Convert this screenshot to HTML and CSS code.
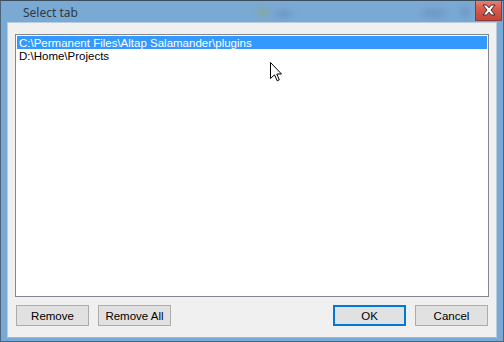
FILE: index.html
```html
<!DOCTYPE html>
<html>
<head>
<meta charset="utf-8">
<link rel="stylesheet" href="styles.css">
</head>
<body>
<div class="window">
  <div class="titlebar">
    <span class="title">Select tab</span>
    <span class="blur blur-green"></span>
    <span class="blur blur-a"></span>
    <span class="blur blur-b"></span>
    <span class="blur blur-c"></span>
    <button class="close" aria-label="Close">
      <svg width="14" height="12" viewBox="0 0 14 12">
        <path d="M1 1h3.6l2.4 2.8 2.4-2.8h3.6l-4 5 4 5h-3.6l-2.4-2.8-2.4 2.8h-3.6l4-5z" fill="#fff" stroke="#3a2a2a" stroke-width="1" stroke-linejoin="round"/>
      </svg>
    </button>
  </div>
  <div class="client">
    <ul class="list">
      <li class="item selected">C:\Permanent Files\Altap Salamander\plugins</li>
      <li class="item">D:\Home\Projects</li>
    </ul>
    <div class="buttons">
      <div class="group">
        <button class="btn">Remove</button>
        <button class="btn">Remove All</button>
      </div>
      <div class="group">
        <button class="btn default">OK</button>
        <button class="btn">Cancel</button>
      </div>
    </div>
  </div>
  <svg class="cursor" width="13" height="20" viewBox="0 0 13 20">
    <path d="M0.5 0.5V16.5L4.5 12.8L7.2 18.8L9.3 17.9L6.8 12H11.5Z" fill="#fff" stroke="#000" stroke-width="1" stroke-linejoin="miter"/>
  </svg>
</div>
</body>
</html>
```

FILE: styles.css
```css
html, body {
  margin: 0;
  padding: 0;
}
body {
  width: 504px;
  height: 342px;
  overflow: hidden;
  background: #7aa9d4;
}
.window {
  position: relative;
  box-sizing: border-box;
  width: 504px;
  height: 342px;
  background: #7aa9d4;
  border: 1px solid #4c6479;
  border-top-color: #3c4d5c;
  display: flex;
  flex-direction: column;
}
.titlebar {
  position: relative;
  height: 21px;
  flex: none;
  display: flex;
  align-items: center;
  overflow: hidden;
}
.title {
  position: relative;
  z-index: 2;
  margin-left: 22px;
  margin-top: 1px;
  font-family: "Noto Sans", "Liberation Sans", sans-serif;
  font-size: 12px;
  color: #2e3a44;
}
.blur {
  position: absolute;
  border-radius: 50%;
  filter: blur(3px);
}
.blur-green {
  left: 256px;
  top: 6px;
  width: 12px;
  height: 10px;
  background: rgba(140, 170, 120, 0.55);
}
.blur-a {
  left: 274px;
  top: 10px;
  width: 18px;
  height: 6px;
  background: rgba(90, 130, 170, 0.5);
}
.blur-b {
  left: 420px;
  top: 8px;
  width: 26px;
  height: 8px;
  background: rgba(90, 130, 170, 0.45);
}
.blur-c {
  left: 460px;
  top: 5px;
  width: 8px;
  height: 12px;
  background: rgba(90, 130, 170, 0.45);
}
.close {
  position: absolute;
  z-index: 2;
  right: 1px;
  top: -1px;
  width: 27px;
  height: 21px;
  margin: 0;
  padding: 0;
  border: 1px solid #8a3a33;
  border-top: none;
  background: linear-gradient(#e8857a, #d65a4c 45%, #c7453a);
  display: flex;
  align-items: center;
  justify-content: center;
}
.close svg {
  display: block;
}
.client {
  flex: 1;
  margin: 0 6px 3px 6px;
  background: #f0f0f0;
  border: 1px solid #b8cde2;
  border-bottom-color: #9fb8cf;
  padding: 11px 7px 0 7px;
  display: flex;
  flex-direction: column;
}
.list {
  list-style: none;
  margin: 0;
  padding: 1px;
  height: 263px;
  box-sizing: border-box;
  border: 1px solid #828790;
  background: #fff;
  flex: none;
  width: 474px;
}
.item {
  height: 13px;
  line-height: 14px;
  padding-left: 2px;
  font-family: "Liberation Sans", "DejaVu Sans", sans-serif;
  font-size: 11.5px;
  color: #000;
  white-space: nowrap;
}
.item.selected {
  background: #3399ff;
  color: #fff;
}
.buttons {
  margin-top: 8px;
  padding: 0 1px;
  display: flex;
  justify-content: space-between;
}
.group {
  display: flex;
  gap: 9px;
}
.btn {
  width: 73px;
  height: 21px;
  margin: 0;
  padding: 0;
  box-sizing: border-box;
  border: 1px solid #acacac;
  background: #e1e1e1;
  font-family: "Liberation Sans", "DejaVu Sans", sans-serif;
  font-size: 11.5px;
  color: #000;
}
.btn.default {
  border: 2px solid #0078d7;
}
.cursor {
  position: absolute;
  left: 269px;
  top: 61px;
}
```
